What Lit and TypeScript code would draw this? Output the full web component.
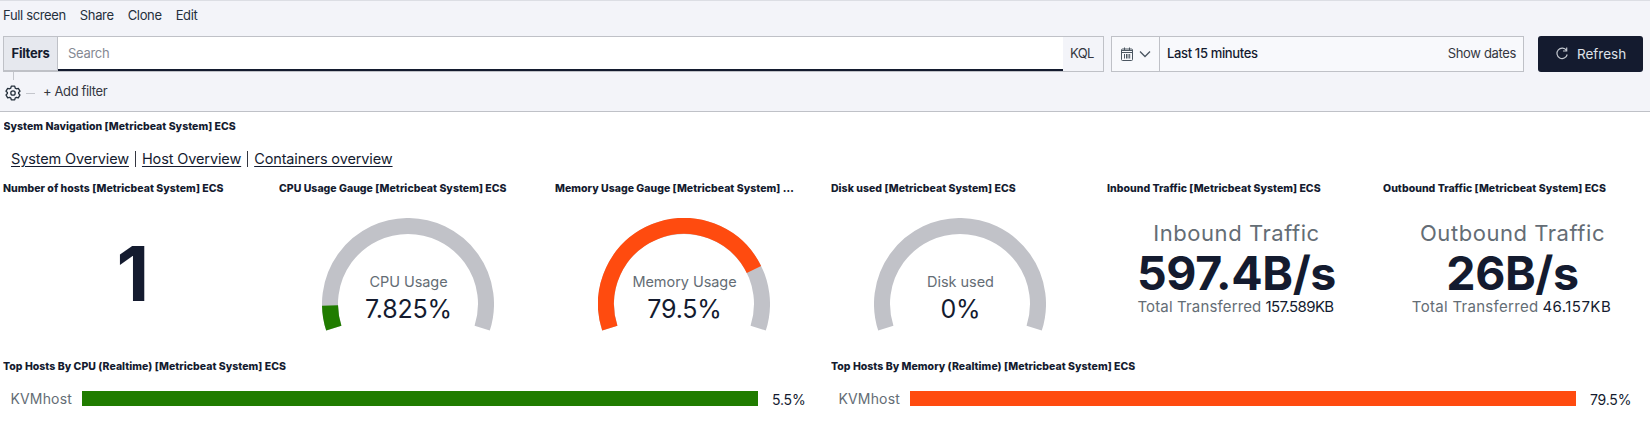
import { LitElement, html, svg, css } from "lit";
import { customElement, property } from "lit/decorators.js";

function arc(from: number, to: number): string {
  const r = 78;
  const point = (t: number) => {
    const a = ((198 - 216 * t) * Math.PI) / 180;
    return `${(86 + r * Math.cos(a)).toFixed(2)} ${(86 - r * Math.sin(a)).toFixed(2)}`;
  };
  return `M${point(from)} A${r} ${r} 0 ${(to - from) * 216 > 180 ? 1 : 0} 1 ${point(to)}`;
}

@customElement("gauge-metric")
export class GaugeMetric extends LitElement {
  @property() label = "";
  @property() text = "";
  @property({ type: Number }) value = 0;
  @property() color = "";
  static styles = css`
    :host { display: grid; width: 172px; height: 114px; margin: 17px 0 0 43px; }
    svg, .copy { grid-area: 1 / 1; }
    svg { width: 172px; height: 114px; }
    .copy { display: flex; flex-direction: column; align-items: center; padding: 54px 0 0 1px; white-space: nowrap; }
    .label { font-size: 14.5px; line-height: 20px; color: #646d75; letter-spacing: -0.05px; }
    .value { padding-top: 1px; font-size: 25px; line-height: 32px; color: #141b2f; letter-spacing: -0.2px; }
  `;
  render() {
    return html`<svg viewBox="0 0 172 114" fill="none" stroke-width="16">
        <path d=${arc(0, 1)} stroke="#c1c2c8"></path>
        ${this.value ? svg`<path d=${arc(0, this.value)} stroke=${this.color}></path>` : ""}
      </svg>
      <div class="copy"><span class="label">${this.label}</span><span class="value">${this.text}</span></div>`;
  }
}

@customElement("traffic-metric")
export class TrafficMetric extends LitElement {
  @property() label = "";
  @property() rate = "";
  @property() total = "";
  static styles = css`
    :host { display: flex; flex-direction: column; align-items: center; width: 259px; padding-top: 17px; color: #141b2f; white-space: nowrap; }
    .label { font-size: 22px; line-height: 30px; color: #646d75; letter-spacing: 0.55px; }
    .rate { padding-top: 2px; font-size: 46.5px; line-height: 46px; font-weight: 700; letter-spacing: -0.4px; }
    .sum { display: flex; gap: 4px; margin-left: -2px; padding-top: 1px; font-size: 15px; line-height: 20px; }
    .key { color: #646d75; letter-spacing: 0.15px; }
    .total { letter-spacing: -0.6px; }
    :host([loose]) .key { letter-spacing: 0.3px; }
    :host([loose]) .total { letter-spacing: 0.45px; }
  `;
  render() {
    return html`<span class="label">${this.label}</span>
      <span class="rate">${this.rate}</span>
      <span class="sum"><span class="key">Total Transferred</span><span class="total">${this.total}</span></span>`;
  }
}

@customElement("host-bar")
export class HostBar extends LitElement {
  @property() text = "";
  @property() color = "";
  static styles = css`
    :host { display: flex; align-items: center; height: 17px; padding: 19px 0 0 7.5px; white-space: nowrap; }
    .name { width: 71.5px; font-size: 14px; line-height: 17px; color: #646d75; letter-spacing: 0.15px; }
    .bar { flex: 1; height: 15px; }
    .value { width: 54px; padding: 3px 0 0 14px; box-sizing: border-box; font-size: 14px; line-height: 17px; color: #141b2f; letter-spacing: -0.2px; }
    :host([wide]) .value { width: 64px; }
  `;
  render() {
    return html`<span class="name">KVMhost</span>
      <div class="bar" style="background:${this.color}"></div>
      <span class="value">${this.text}</span>`;
  }
}

@customElement("app-root")
export class AppRoot extends LitElement {
  static styles = css`
    :host { display: block; width: 1650px; height: 429px; overflow: hidden; background: #fff; color: #141b2f; font-family: Inter, "Liberation Sans", sans-serif; white-space: nowrap; }
    * { box-sizing: border-box; }
    .header { height: 112px; background: #f3f4f9; border-top: 1px solid #dcdee4; border-bottom: 1px solid #bfc1c7; padding-left: 3px; }
    .menu { display: flex; gap: 14px; height: 35px; padding-top: 6px; font-size: 13px; line-height: 17px; color: #25303c; letter-spacing: -0.35px; }
    .query { display: flex; height: 36px; }
    .search { display: flex; width: 1101px; border: 1px solid #bfc1c7; }
    .filters { width: 54px; border-right: 1px solid #bfc1c7; border-bottom: 1px solid #bfc1c7; background: #e6e8ee; padding-left: 7.5px; font-size: 13px; font-weight: 700; line-height: 33px; letter-spacing: -0.25px; }
    .input { flex: 1; background: #fff; border-bottom: 2px solid #141b2f; padding-left: 10px; font-size: 13px; line-height: 33px; color: #858993; letter-spacing: -0.3px; }
    .kql { width: 40px; padding-left: 7px; font-size: 13px; line-height: 33px; color: #343741; letter-spacing: -0.6px; }
    .dates { display: flex; align-items: center; width: 413px; margin-left: 7px; border: 1px solid #bfc1c7; background: #f8f9fc; font-size: 13px; letter-spacing: -0.35px; }
    .quick { display: flex; align-items: center; gap: 5px; width: 48px; height: 34px; padding-left: 8px; border-right: 1px solid #bfc1c7; }
    .range { flex: 1; padding: 0 0 2px 7px; font-weight: 500; }
    .show { padding: 0 7px 2px 0; color: #343741; }
    .refresh { display: flex; align-items: center; gap: 8px; width: 105px; height: 36px; margin-left: 14px; padding-left: 17px; border-radius: 3px; background: #141b2f; color: #dfe2e8; font-size: 13.5px; }
    .filterbar { display: flex; height: 39px; }
    .options { display: flex; flex-direction: column; width: 20px; }
    .stem { width: 1px; height: 8px; margin: 0 0 5px 10px; background: #c4c6cc; }
    .gear { margin-left: 2px; }
    .dash { width: 9px; height: 1px; margin: 21px 8px 0 3px; background: #c4c6cc; }
    .add { padding-top: 9px; font-size: 13px; line-height: 20px; color: #343741; letter-spacing: -0.38px; }
    .title { height: 24px; font-size: 10.5px; line-height: 23px; font-weight: 800; letter-spacing: 0.03px; overflow: hidden; text-overflow: ellipsis; }
    .nav { padding: 3px 0 0 3.5px; }
    .links { display: flex; height: 35px; padding: 9px 0 0 7.5px; font-size: 14.5px; line-height: 21px; letter-spacing: -0.12px; }
    .link { color: #141b2f; text-decoration: underline; text-underline-offset: 2px; }
    .pipe { width: 1px; height: 16px; margin: 3px 6px 0; background: #343741; }
    .metrics { display: grid; grid-template-columns: repeat(6, 276px); height: 179px; padding: 3px 0 0 3px; }
    .metrics .title { width: 241px; }
    .count { width: 260px; padding-top: 26px; text-align: center; font-size: 76px; line-height: 92px; font-weight: 700; }
    .hosts { display: grid; grid-template-columns: 828px 819px; padding: 2px 0 0 3px; }
    .host-panel { width: 809px; }
  `;
  render() {
    return html`
      <header class="header">
        <nav class="menu"><span>Full screen</span><span>Share</span><span>Clone</span><span>Edit</span></nav>
        <div class="query">
          <div class="search"><div class="filters">Filters</div><div class="input">Search</div><div class="kql">KQL</div></div>
          <div class="dates">
            <div class="quick">
              <svg width="14" height="14" viewBox="0 0 14 14" fill="none" stroke="#4b5661"><rect x="1.5" y="2" width="11" height="11.500" rx="1"/><path d="M1.500 3.500h11M2 5.500h10M4.500 .5v3M9.500 .5v3M4.500 7v4.500M6.500 7v4.500M8 7v4.500M9.700 7v4.500"/></svg>
              <svg width="12" height="8" viewBox="0 0 12 8" fill="none" stroke="#4b5661" stroke-width="1.300"><path d="M1 1.500l5 5 5-5"/></svg>
            </div>
            <span class="range">Last 15 minutes</span><span class="show">Show dates</span>
          </div>
          <div class="refresh">
            <svg width="14" height="14" viewBox="0 0 14 14" fill="none" stroke="#c2c7ce" stroke-width="1.200"><path d="M11.500 3.500A5.200 5.200 0 1 0 12.200 7.500M11.700 .5v3.500H8"/></svg>
            <span>Refresh</span>
          </div>
        </div>
        <div class="filterbar">
          <div class="options"><i class="stem"></i>
            <svg class="gear" width="16" height="16" viewBox="0 0 16 16" fill="none" stroke="#25303c" stroke-width="1.300" stroke-linejoin="round"><path d="M6.300 1.200h3.400l.5 1.900 1.200.7 1.900-.5 1.700 2.900-1.400 1.300v1.100l1.400 1.300-1.700 2.900-1.900-.5-1.200.7-.5 1.900H6.300l-.5-1.900-1.200-.7-1.900.5L1 9.900l1.400-1.300V7.500L1 6.200l1.700-2.900 1.900.5 1.200-.7z"/><circle cx="8" cy="8" r="2.200"/></svg>
          </div>
          <i class="dash"></i><span class="add">+ Add filter</span>
        </div>
      </header>
      <section class="nav">
        <div class="title">System Navigation [Metricbeat System] ECS</div>
        <div class="links"><a class="link">System Overview</a><i class="pipe"></i><a class="link">Host Overview</a><i class="pipe"></i><a class="link">Containers overview</a></div>
      </section>
      <section class="metrics">
        <div><div class="title">Number of hosts [Metricbeat System] ECS</div><div class="count">1</div></div>
        <div><div class="title">CPU Usage Gauge [Metricbeat System] ECS</div><gauge-metric label="CPU Usage" text="7.825%" value="0.07825" color="#207c00"></gauge-metric></div>
        <div><div class="title">Memory Usage Gauge [Metricbeat System] ECS</div><gauge-metric label="Memory Usage" text="79.5%" value="0.795" color="#ff4b0f"></gauge-metric></div>
        <div><div class="title">Disk used [Metricbeat System] ECS</div><gauge-metric label="Disk used" text="0%" value="0"></gauge-metric></div>
        <div><div class="title">Inbound Traffic [Metricbeat System] ECS</div><traffic-metric label="Inbound Traffic" rate="597.4B/s" total="157.589KB"></traffic-metric></div>
        <div><div class="title">Outbound Traffic [Metricbeat System] ECS</div><traffic-metric loose label="Outbound Traffic" rate="26B/s" total="46.157KB"></traffic-metric></div>
      </section>
      <section class="hosts">
        <div class="host-panel"><div class="title">Top Hosts By CPU (Realtime) [Metricbeat System] ECS</div><host-bar text="5.5%" color="#207c00"></host-bar></div>
        <div class="host-panel"><div class="title">Top Hosts By Memory (Realtime) [Metricbeat System] ECS</div><host-bar wide text="79.5%" color="#ff4b0f"></host-bar></div>
      </section>`;
  }
}
